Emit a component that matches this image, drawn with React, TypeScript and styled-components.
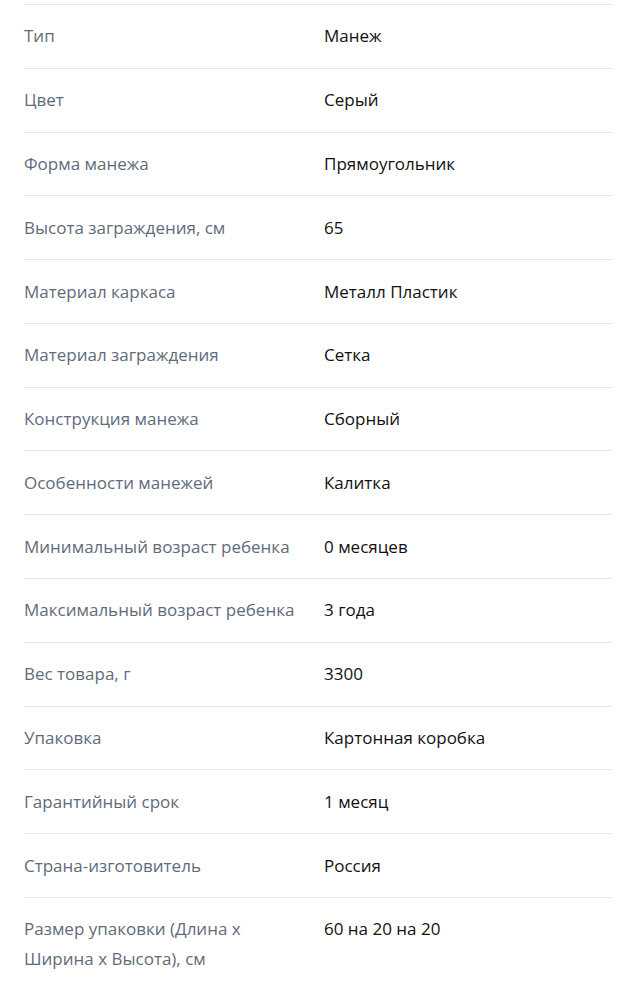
import { createGlobalStyle, styled } from "styled-components"

const GlobalStyle = createGlobalStyle`
  html, body {
    margin: 0;
    padding: 0;
    background: #ffffff;
  }
  body {
    font-family: "Open Sans", "Liberation Sans", sans-serif;
    -webkit-font-smoothing: antialiased;
  }
`

const specs: [string, string][] = [
  ['Тип', 'Манеж'],
  ['Цвет', 'Серый'],
  ['Форма манежа', 'Прямоугольник'],
  ['Высота заграждения, см', '65'],
  ['Материал каркаса', 'Металл Пластик'],
  ['Материал заграждения', 'Сетка'],
  ['Конструкция манежа', 'Сборный'],
  ['Особенности манежей', 'Калитка'],
  ['Минимальный возраст ребенка', '0 месяцев'],
  ['Максимальный возраст ребенка', '3 года'],
  ['Вес товара, г', '3300'],
  ['Упаковка', 'Картонная коробка'],
  ['Гарантийный срок', '1 месяц'],
  ['Страна-изготовитель', 'Россия'],
  ['Размер упаковки (Длина х Ширина х Высота), см', '60 на 20 на 20'],
]

const Card = styled.section`
  background: #fff;
  padding: 4px 24px 30px;
  border-radius: 0 0 16px 16px;
`

const List = styled.dl`
  margin: 0;
`

const Row = styled.div`
  display: grid;
  grid-template-columns: 300px 1fr;
  border-top: 1px solid #e4e6ea;
  padding: 16.4px 0;
`

const Label = styled.dt`
  margin: 0;
  font-size: 17px;
  line-height: 30px;
  color: #5f6b7a;
  padding-right: 20px;
`

const Value = styled.dd`
  margin: 0;
  font-size: 17px;
  line-height: 30px;
  color: #111;
`

const App = () => {
  return (
    <>
      <GlobalStyle />
      <Card>
        <List>
          {specs.map(([label, value]) => (
            <Row key={label}>
              <Label>{label}</Label>
              <Value>{value}</Value>
            </Row>
          ))}
        </List>
      </Card>
    </>
  )
}

export default App
